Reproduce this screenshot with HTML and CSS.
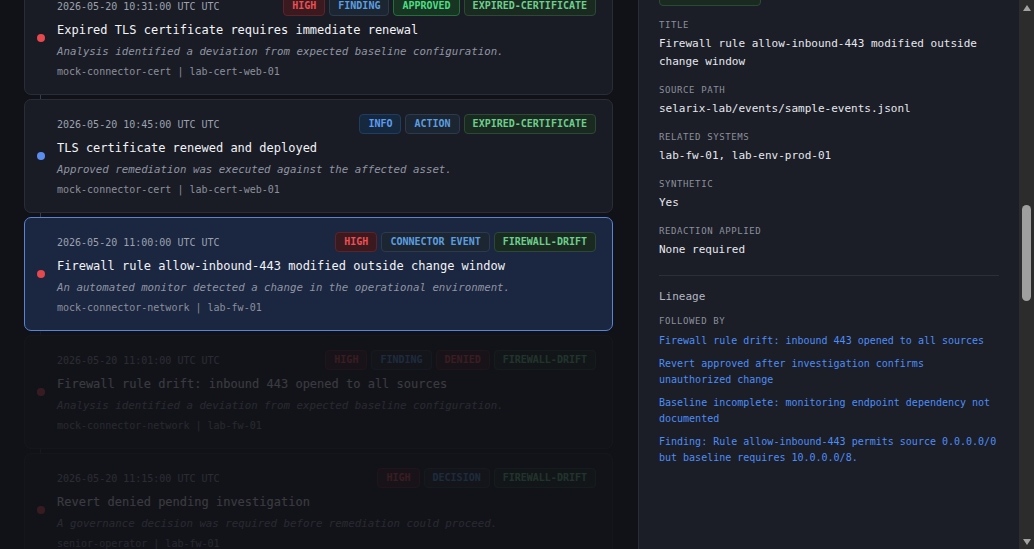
FILE: index.html
```html
<!DOCTYPE html>
<html lang="en">
<head>
    <meta charset="UTF-8">
    <meta name="viewport" content="width=device-width, initial-scale=1.0">
    <title>Selarix Lab - Event Timeline</title>
    <link rel="stylesheet" href="styles.css">
</head>
<body>
<div class="layout">
    <main class="timeline-pane" id="timelinePane">
        <div class="pane-head">
            <h1>Event timeline</h1>
            <span class="count">7 events</span>
        </div>
        <ol class="timeline">
            <li class="event">
                <span class="dot dot-info"></span>
                <div class="event-head">
                    <span class="time">2026-05-20 10:30:00 UTC UTC</span>
                    <div class="badges">
                        <span class="badge b-info">INFO</span>
                        <span class="badge b-kind">CONNECTOR EVENT</span>
                        <span class="badge b-cat">EXPIRED-CERTIFICATE</span>
                    </div>
                </div>
                <div class="event-title">Certificate expiry detected on lab-cert-web-01</div>
                <div class="event-desc">An automated monitor detected a change in the operational environment.</div>
                <div class="event-meta">mock-connector-cert | lab-cert-web-01</div>
            </li>
            <li class="event" id="firstVisible">
                <span class="dot dot-high"></span>
                <div class="event-head">
                    <span class="time">2026-05-20 10:31:00 UTC UTC</span>
                    <div class="badges">
                        <span class="badge b-high">HIGH</span>
                        <span class="badge b-kind">FINDING</span>
                        <span class="badge b-approved">APPROVED</span>
                        <span class="badge b-cat">EXPIRED-CERTIFICATE</span>
                    </div>
                </div>
                <div class="event-title">Expired TLS certificate requires immediate renewal</div>
                <div class="event-desc">Analysis identified a deviation from expected baseline configuration.</div>
                <div class="event-meta">mock-connector-cert | lab-cert-web-01</div>
            </li>
            <li class="event">
                <span class="dot dot-info"></span>
                <div class="event-head">
                    <span class="time">2026-05-20 10:45:00 UTC UTC</span>
                    <div class="badges">
                        <span class="badge b-info">INFO</span>
                        <span class="badge b-kind">ACTION</span>
                        <span class="badge b-cat">EXPIRED-CERTIFICATE</span>
                    </div>
                </div>
                <div class="event-title">TLS certificate renewed and deployed</div>
                <div class="event-desc">Approved remediation was executed against the affected asset.</div>
                <div class="event-meta">mock-connector-cert | lab-cert-web-01</div>
            </li>
            <li class="event selected">
                <span class="dot dot-high"></span>
                <div class="event-head">
                    <span class="time">2026-05-20 11:00:00 UTC UTC</span>
                    <div class="badges">
                        <span class="badge b-high">HIGH</span>
                        <span class="badge b-kind">CONNECTOR EVENT</span>
                        <span class="badge b-cat">FIREWALL-DRIFT</span>
                    </div>
                </div>
                <div class="event-title">Firewall rule allow-inbound-443 modified outside change window</div>
                <div class="event-desc">An automated monitor detected a change in the operational environment.</div>
                <div class="event-meta">mock-connector-network | lab-fw-01</div>
            </li>
            <li class="event muted">
                <span class="dot dot-high"></span>
                <div class="event-head">
                    <span class="time">2026-05-20 11:01:00 UTC UTC</span>
                    <div class="badges">
                        <span class="badge b-high">HIGH</span>
                        <span class="badge b-kind">FINDING</span>
                        <span class="badge b-denied">DENIED</span>
                        <span class="badge b-cat">FIREWALL-DRIFT</span>
                    </div>
                </div>
                <div class="event-title">Firewall rule drift: inbound 443 opened to all sources</div>
                <div class="event-desc">Analysis identified a deviation from expected baseline configuration.</div>
                <div class="event-meta">mock-connector-network | lab-fw-01</div>
            </li>
            <li class="event muted">
                <span class="dot dot-high"></span>
                <div class="event-head">
                    <span class="time">2026-05-20 11:15:00 UTC UTC</span>
                    <div class="badges">
                        <span class="badge b-high">HIGH</span>
                        <span class="badge b-kind">DECISION</span>
                        <span class="badge b-cat">FIREWALL-DRIFT</span>
                    </div>
                </div>
                <div class="event-title">Revert denied pending investigation</div>
                <div class="event-desc">A governance decision was required before remediation could proceed.</div>
                <div class="event-meta">senior-operator | lab-fw-01</div>
            </li>
            <li class="event muted">
                <span class="dot dot-info"></span>
                <div class="event-head">
                    <span class="time">2026-05-20 11:42:00 UTC UTC</span>
                    <div class="badges">
                        <span class="badge b-high">HIGH</span>
                        <span class="badge b-kind">DECISION</span>
                        <span class="badge b-approved">APPROVED</span>
                        <span class="badge b-cat">FIREWALL-DRIFT</span>
                    </div>
                </div>
                <div class="event-title">Revert approved after investigation confirms unauthorized change</div>
                <div class="event-desc">A governance decision was required before remediation could proceed.</div>
                <div class="event-meta">senior-operator | lab-fw-01</div>
            </li>
        </ol>
    </main>

    <div class="detail-wrap">
        <aside class="detail" id="detail">
            <div class="detail-head">
                <h2>Event detail</h2>
                <button type="button" class="close">&times;</button>
            </div>
            <div class="detail-title">Firewall rule allow-inbound-443 modified outside change window</div>
            <div class="badges detail-badges">
                <span class="badge b-high">HIGH</span>
                <span class="badge b-kind">CONNECTOR EVENT</span>
                <span class="badge b-cat">FIREWALL-DRIFT</span>
            </div>
            <p class="summary">An automated monitor detected a change in the operational environment. The rule was edited at 11:00 UTC, outside the approved change window for lab-fw-01.</p>

            <h3 class="section-title">Evidence</h3>
            <pre class="code">{
  "rule_id": "allow-inbound-443",
  "device": "lab-fw-01",
  "action": "modify",
  "before": { "source": "10.0.0.0/8", "port": 443 },
  "after": { "source": "0.0.0.0/0", "port": 443 },
  "change_ticket": null
}</pre>

            <div class="fields">
                <div class="field"><div class="label">Event ID</div><div class="value">evt-lab-0004</div></div>
                <div class="field"><div class="label">Timestamp</div><div class="value">2026-05-20 11:00:00 UTC</div></div>
                <div class="field"><div class="label">Connector</div><div class="value">mock-connector-network</div></div>
                <div class="field"><div class="label">Event type</div><div class="value">Connector event</div></div>
                <div class="field"><div class="label">Severity</div><div class="value">High</div></div>
                <div class="field"><div class="label">Asset</div><div class="value">lab-fw-01</div></div>
                <div class="field"><div class="label">Category</div><div class="value value-badge"><span class="badge b-cat">FIREWALL-DRIFT</span></div></div>
                <div class="field" id="titleField"><div class="label">Title</div><div class="value">Firewall rule allow-inbound-443 modified outside change window</div></div>
                <div class="field"><div class="label">Source path</div><div class="value">selarix-lab/events/sample-events.jsonl</div></div>
                <div class="field"><div class="label">Related systems</div><div class="value">lab-fw-01, lab-env-prod-01</div></div>
                <div class="field"><div class="label">Synthetic</div><div class="value">Yes</div></div>
                <div class="field"><div class="label">Redaction applied</div><div class="value">None required</div></div>
            </div>

            <hr class="rule">

            <h3 class="section-title">Lineage</h3>
            <div class="label">Followed by</div>
            <a class="link" href="#">Firewall rule drift: inbound 443 opened to all sources</a>
            <a class="link" href="#">Revert approved after investigation confirms unauthorized change</a>
            <a class="link" href="#">Baseline incomplete: monitoring endpoint dependency not documented</a>
            <a class="link" href="#">Finding: Rule allow-inbound-443 permits source 0.0.0.0/0 but baseline requires 10.0.0.0/8.</a>

            <div class="raw">
                <hr class="rule">
                <h3 class="section-title">Raw event</h3>
                <pre class="code">{
  "id": "evt-lab-0004",
  "timestamp": "2026-05-20T11:00:00Z",
  "connector": "mock-connector-network",
  "type": "connector_event",
  "severity": "high",
  "category": "firewall-drift",
  "asset": "lab-fw-01",
  "related_systems": ["lab-fw-01", "lab-env-prod-01"],
  "synthetic": true,
  "redaction": { "applied": false }
}</pre>
            </div>
        </aside>
        <div class="scrollbar" aria-hidden="true">
            <span class="sb-arrow sb-up"></span>
            <div class="sb-track"><div class="sb-thumb"></div></div>
            <span class="sb-arrow sb-down"></span>
        </div>
    </div>
</div>

<script>
    let pane = document.getElementById('timelinePane');
    let first = document.getElementById('firstVisible');
    pane.scrollTop = first.getBoundingClientRect().top - pane.getBoundingClientRect().top + 19;

    let detail = document.getElementById('detail');
    let titleField = document.getElementById('titleField');
    detail.scrollTop = titleField.getBoundingClientRect().top - detail.getBoundingClientRect().top - 19;
</script>
</body>
</html>
```

FILE: styles.css
```css
* { box-sizing: border-box; }
html, body { height: 100%; }
body { margin: 0; background: #111217; color: #e6e8ee; font-family: "DejaVu Sans Mono", "Liberation Mono", monospace; }
.layout { display: flex; height: 100vh; }

/* timeline */
.timeline-pane { flex: none; width: 638px; overflow-y: auto; scrollbar-width: none; padding: 20px 25px 40px 24px; }
.pane-head { display: flex; justify-content: space-between; align-items: center; margin-bottom: 16px; }
.pane-head h1 { margin: 0; font-size: 13px; color: #c9ccd5; }
.count { font-size: 10px; color: #8a909c; }
.timeline { list-style: none; margin: 0; padding: 0; display: flex; flex-direction: column; gap: 4px; }
.event { position: relative; background: #1a1c25; border: 1px solid #2a2d38; border-radius: 7px; padding: 14px 16px 15px 32px; }
.event + .event::before { content: ""; position: absolute; left: 15px; top: -5px; width: 1px; height: 4px; background: #3a3d48; }
.event.selected { background: #1b2640; border-color: #5883d6; }
.event.muted { opacity: .18; }
.dot { position: absolute; left: 12px; top: 50%; width: 8px; height: 8px; margin-top: -4px; border-radius: 50%; }
.dot-high { background: #e5484d; }
.dot-info { background: #5b8def; }
.event-head { display: flex; justify-content: space-between; align-items: center; height: 20px; }
.time { font-size: 10px; color: #9ca2af; }
.event-title { margin-top: 6px; font-size: 12px; line-height: 16px; color: #f1f3f7; }
.event-desc { margin-top: 6px; font-size: 10.75px; line-height: 16px; font-style: italic; color: #8f95a3; }
.event-meta { margin-top: 5px; font-size: 10px; line-height: 14px; color: #8a909c; }

/* badges */
.badges { display: flex; gap: 4px; }
.badge { display: inline-block; height: 20px; line-height: 18px; padding: 0 8px; border: 1px solid; border-radius: 4px; font-size: 10px; font-weight: bold; white-space: nowrap; }
.b-high, .b-denied { background: #3a1a1f; border-color: #5e2328; color: #ec4f54; }
.b-kind { background: #1c2532; border-color: #2c3a4c; color: #5b9fe0; }
.b-info { background: #16283e; border-color: #1f3d60; color: #5c9cf0; }
.b-approved { background: #183524; border-color: #23703c; color: #4ade80; }
.b-cat { background: #1a2a21; border-color: #2b4a35; color: #6ccf8b; }

/* detail panel */
.detail-wrap { flex: 1; display: flex; min-width: 0; background: #1b1d27; border-left: 1px solid #2a2c36; }
.detail { flex: 1; min-width: 0; overflow-y: auto; scrollbar-width: none; padding: 21px 20px 24px 20px; }
.detail-head { display: flex; justify-content: space-between; align-items: center; margin-bottom: 14px; }
.detail-head h2 { margin: 0; font-size: 13px; color: #c9ccd5; }
.close { background: none; border: 1px solid #2c2f3a; border-radius: 4px; color: #8a909c; width: 24px; height: 24px; cursor: pointer; }
.detail-title { font-size: 13px; line-height: 20px; font-weight: bold; color: #eceef3; }
.detail-badges { margin: 10px 0 16px; }
.summary { margin: 0 0 18px; font-size: 11px; line-height: 18px; color: #b8bcc7; }
.section-title { margin: 0 0 10px; font-size: 11px; line-height: 16px; font-weight: normal; color: #b2b7c2; }
.code { margin: 0 0 22px; padding: 12px; background: #15171f; border: 1px solid #2a2c36; border-radius: 6px; font-size: 10px; line-height: 16px; color: #aeb4c0; white-space: pre-wrap; }
.fields { display: flex; flex-direction: column; gap: 13px; }
.label { font-size: 9px; line-height: 12px; letter-spacing: .6px; text-transform: uppercase; color: #8b909c; }
.value { margin-top: 4px; font-size: 11px; line-height: 18px; color: #e6e8ee; }
.value-badge { display: flex; }
.rule { border: none; border-top: 1px solid #2c2f3a; margin: 16px 0 13px; }
.detail > .label { margin-bottom: 6px; }
.link { display: block; font-size: 10px; line-height: 16px; color: #4d8ef5; text-decoration: none; }
.link + .link { margin-top: 7px; }
.raw { margin-top: 100px; }

/* scrollbar of the detail panel */
.scrollbar { flex: none; width: 15px; display: flex; flex-direction: column; background: #2c2c2c; }
.sb-arrow { flex: none; height: 15px; display: flex; align-items: center; justify-content: center; }
.sb-arrow::before { content: ""; border-left: 4.5px solid transparent; border-right: 4.5px solid transparent; }
.sb-up::before { border-bottom: 6px solid #a3a3a3; }
.sb-down::before { border-top: 6px solid #a3a3a3; }
.sb-track { flex: 1; padding: 190px 3px 0; }
.sb-thumb { height: 96px; border-radius: 5px; background: #9f9f9f; }
```
